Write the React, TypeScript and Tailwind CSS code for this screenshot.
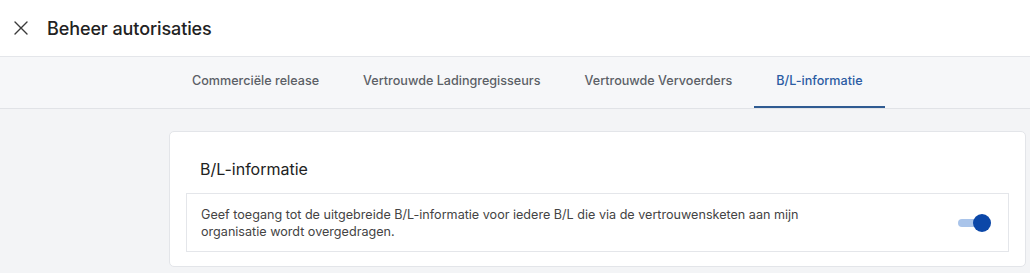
import React from 'react';

const tabs = [
  { label: 'Commerciële release' },
  { label: 'Vertrouwde Ladingregisseurs' },
  { label: 'Vertrouwde Vervoerders' },
  { label: 'B/L-informatie', active: true },
];

function CloseIcon() {
  return (
    <svg width="14" height="14" viewBox="0 0 14 14" fill="none" stroke="#3a3a3a" strokeWidth="1.4" strokeLinecap="round">
      <path d="M1 1L13 13M13 1L1 13" />
    </svg>
  );
}

function Toggle() {
  return (
    <div className="relative w-[33px] h-[18px] flex items-center">
      <div className="w-[28px] h-[8px] rounded-full bg-[#a9c4ea]" />
      <div className="absolute right-0 top-0 w-[18px] h-[18px] rounded-full bg-[#0b47a8]" />
    </div>
  );
}

export default function App() {
  return (
    <div className="w-full h-[273px] overflow-hidden bg-[#f3f4f6] font-['Inter',sans-serif]">
      <header className="h-[57px] bg-white border-b border-[#e4e6ea] flex items-center pl-[14px]">
        <CloseIcon />
        <h1 className="ml-[19px] text-[18px] font-medium text-[#222] tracking-[-0.1px]">Beheer autorisaties</h1>
      </header>

      <nav className="h-[52px] bg-[#f6f7f9] border-b border-[#e1e3e7] flex pl-[170px]">
        {tabs.map((t) => (
          <div
            key={t.label}
            className={
              t.active
                ? 'px-[22px] flex items-center text-[12.6px] font-medium text-[#2b5ca3] border-b-2 border-[#2f5b92]'
                : 'px-[22px] flex items-center text-[12.6px] font-medium text-[#5b5f66] border-b-2 border-transparent'
            }
          >
            {t.label}
          </div>
        ))}
      </nav>

      <main className="pt-[22px] pl-[169px] pr-[4px]">
        <section className="bg-white border border-[#e3e5e9] rounded-[5px] px-4 pt-[25px] pb-[14px]">
          <h2 className="pl-[14px] text-[16px] leading-6 text-[#222] mb-[12px]">B/L-informatie</h2>
          <div className="h-[59px] border border-[#e4e6ea] flex items-center justify-between pl-[14px] pr-[17px]">
            <p className="w-[640px] text-[12.6px] leading-[17px] text-[#444]">
              Geef toegang tot de uitgebreide B/L-informatie voor iedere B/L die via de vertrouwensketen aan mijn
              organisatie wordt overgedragen.
            </p>
            <Toggle />
          </div>
        </section>
      </main>
    </div>
  );
}
